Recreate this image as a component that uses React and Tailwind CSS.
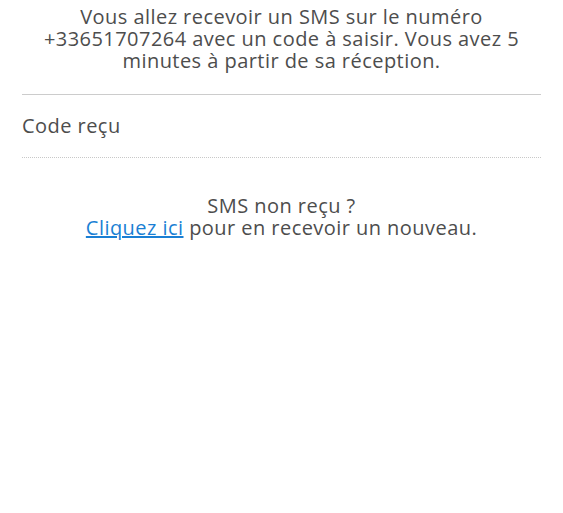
export default function App() {
  return (
    <div className="min-h-[513px] w-full bg-white px-[22px] pt-[6px] text-[#4d4d4d]" style={{ fontFamily: '"Open Sans", "Noto Sans", sans-serif' }}>
      <p className="text-center text-[20px] leading-[22px] tracking-[0.45px]">
        Vous allez recevoir un SMS sur le numéro
        <br />
        +33651707264 avec un code à saisir. Vous avez 5
        <br />
        minutes à partir de sa réception.
      </p>

      <div className="mt-[22px] border-t border-[#cccccc]">
        <div className="flex h-[62px] items-center text-[20px] tracking-[0.45px]">Code reçu</div>
        <div className="border-t border-dotted border-[#c8c8c8]" />
      </div>

      <div className="mt-[37px] text-center text-[20px] leading-[22px] tracking-[0.45px]">
        <p>SMS non reçu ?</p>
        <p>
          <a href="#" className="text-[#1a7fd4] underline">Cliquez ici</a> pour en recevoir un nouveau.
        </p>
      </div>
    </div>
  );
}
